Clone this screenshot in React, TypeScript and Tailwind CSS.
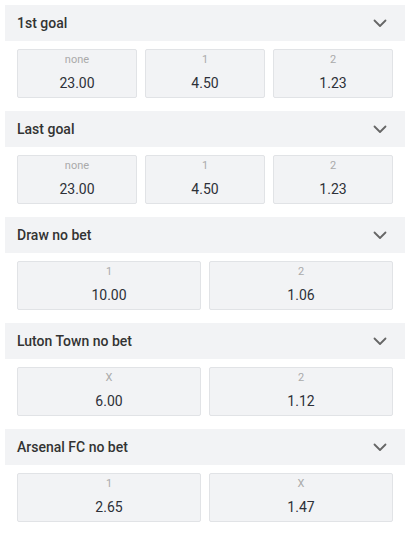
import React from 'react';

type Market = {
    title: string;
    outcomes: { label: string; odds: string }[];
};

const markets: Market[] = [
    {
        title: '1st goal',
        outcomes: [
            { label: 'none', odds: '23.00' },
            { label: '1', odds: '4.50' },
            { label: '2', odds: '1.23' },
        ],
    },
    {
        title: 'Last goal',
        outcomes: [
            { label: 'none', odds: '23.00' },
            { label: '1', odds: '4.50' },
            { label: '2', odds: '1.23' },
        ],
    },
    {
        title: 'Draw no bet',
        outcomes: [
            { label: '1', odds: '10.00' },
            { label: '2', odds: '1.06' },
        ],
    },
    {
        title: 'Luton Town no bet',
        outcomes: [
            { label: 'X', odds: '6.00' },
            { label: '2', odds: '1.12' },
        ],
    },
    {
        title: 'Arsenal FC no bet',
        outcomes: [
            { label: '1', odds: '2.65' },
            { label: 'X', odds: '1.47' },
        ],
    },
];

const Chevron = () => (
    <svg width="14" height="14" viewBox="0 0 14 14" fill="none" className="text-[#666]">
        <path d="M1.5 4.5 L7 10 L12.5 4.5" stroke="currentColor" strokeWidth="1.8" strokeLinecap="round" strokeLinejoin="round" />
    </svg>
);

const App = () => {
    return (
        <div className="w-[408px] min-h-[533px] bg-white pt-[5px] pl-[5px] pr-[3px] font-['Roboto',sans-serif]">
            {markets.map((market) => (
                <section key={market.title} className="w-[400px] pb-[13px]">
                    <div className="flex items-center justify-between h-[36px] pl-[12px] pr-[18px] bg-[#f2f3f5]">
                        <span className="text-[14px] font-medium text-[#333]">{market.title}</span>
                        <Chevron />
                    </div>
                    <div
                        className={`grid gap-[8px] px-[12px] pt-[8px] ${
                            market.outcomes.length === 3 ? 'grid-cols-3' : 'grid-cols-2'
                        }`}
                    >
                        {market.outcomes.map((o) => (
                            <button
                                key={o.label}
                                className="flex flex-col items-center h-[49px] pt-[3px] bg-[#f2f3f5] border border-[#e1e3e6] rounded-[2px]"
                            >
                                <span className="text-[11px] leading-[14px] text-[#aaa]">{o.label}</span>
                                <span className="mt-[6px] text-[14px] leading-[20px] text-[#2d3038]">{o.odds}</span>
                            </button>
                        ))}
                    </div>
                </section>
            ))}
        </div>
    );
};

export default App;
